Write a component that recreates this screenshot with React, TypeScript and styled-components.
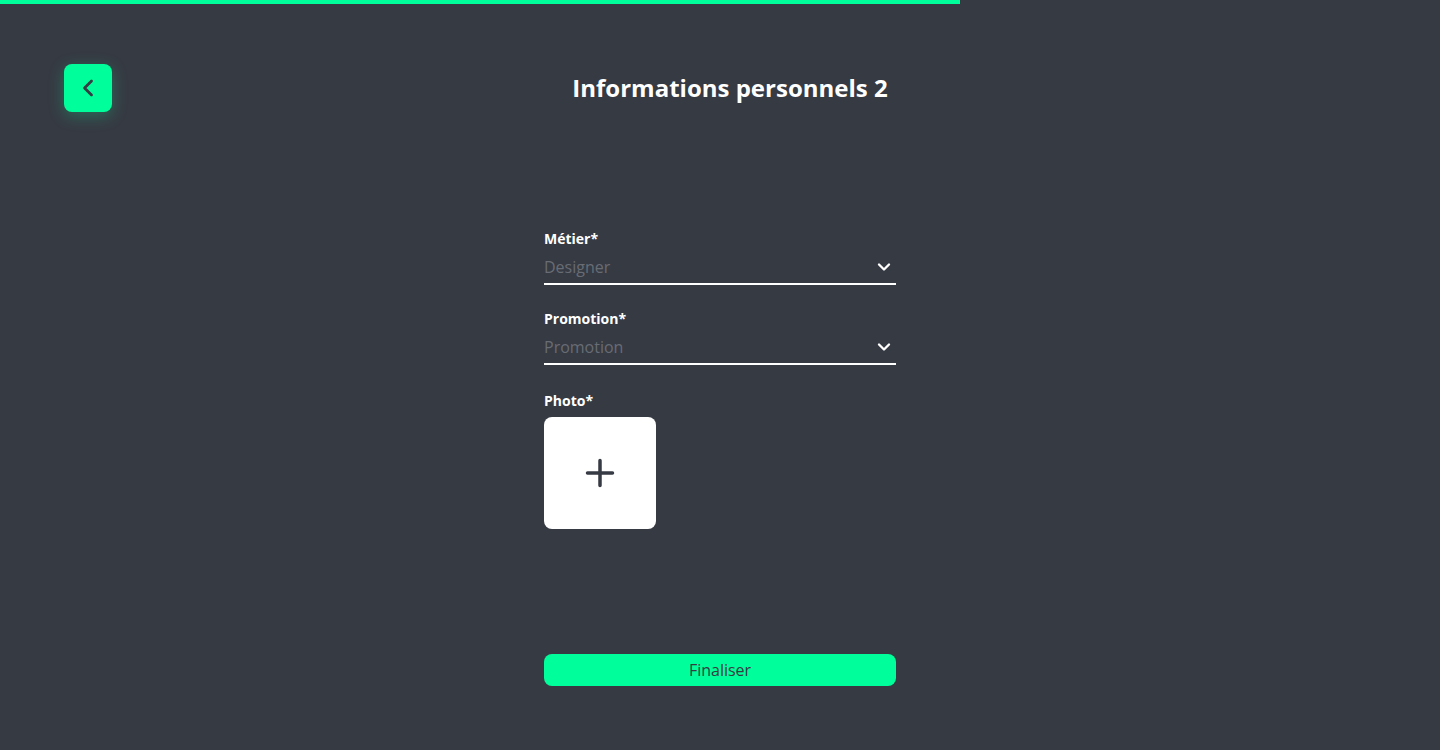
import React from "react";
import styled, { createGlobalStyle } from "styled-components";

const Global = createGlobalStyle`
  html, body { margin: 0; padding: 0; background: #363a43; }
  body { font-family: "Open Sans", "Noto Sans", sans-serif; color: #ffffff; }
  * { box-sizing: border-box; }
`;

const Page = styled.div`
  width: 1440px;
  min-height: 750px;
  background: #363a43;
  display: flex;
  flex-direction: column;
`;

const Progress = styled.div`
  height: 4px;
  width: 100%;
  background: transparent;
`;

const ProgressFill = styled.div`
  height: 100%;
  background: #00ff9a;
`;

const Header = styled.header`
  display: flex;
  align-items: center;
  padding: 60px 92px 0 64px;
`;

const BackButton = styled.button`
  width: 48px;
  height: 48px;
  border: none;
  border-radius: 8px;
  background: #00ff9a;
  box-shadow: 0 4px 16px rgba(0, 255, 154, 0.25);
  display: flex;
  align-items: center;
  justify-content: center;
  padding: 0;
  cursor: pointer;
  flex-shrink: 0;
`;

const Title = styled.h1`
  flex: 1;
  margin: 0;
  text-align: center;
  font-size: 24px;
  font-weight: 700;
  line-height: 32px;
  color: #ffffff;
`;

const Form = styled.form`
  width: 352px;
  margin: 117px auto 0;
  display: flex;
  flex-direction: column;
`;

const Field = styled.div<{ $gap?: number }>`
  display: flex;
  flex-direction: column;
  margin-top: ${(p) => p.$gap ?? 0}px;
`;

const Label = styled.label`
  font-size: 14px;
  font-weight: 700;
  line-height: 20px;
  color: #ffffff;
`;

const SelectRow = styled.div`
  display: flex;
  align-items: center;
  justify-content: space-between;
  padding: 7px 0 5px;
  border-bottom: 2px solid #ffffff;
`;

const Placeholder = styled.span`
  font-size: 16px;
  line-height: 22px;
  color: #686c74;
`;

const ChevronWrap = styled.span`
  display: flex;
  margin-right: 2px;
`;

const PhotoBox = styled.div`
  margin-top: 6px;
  width: 112px;
  height: 112px;
  border-radius: 8px;
  background: #ffffff;
  display: flex;
  align-items: center;
  justify-content: center;
`;

const SubmitButton = styled.button`
  margin-top: 125px;
  height: 32px;
  width: 100%;
  border: none;
  border-radius: 8px;
  background: #00ff9a;
  color: #363a43;
  font-family: "Open Sans", "Noto Sans", sans-serif;
  font-size: 16px;
  line-height: 22px;
  cursor: pointer;
`;

const Chevron = () => (
  <ChevronWrap>
    <svg width="20" height="20" viewBox="0 0 24 24" fill="none" stroke="#ffffff" strokeWidth="2.8" strokeLinecap="round" strokeLinejoin="round">
      <path d="m6 9 6 6 6-6" />
    </svg>
  </ChevronWrap>
);

const BackIcon = () => (
  <svg width="28" height="28" viewBox="0 0 24 24" fill="none" stroke="#363a43" strokeWidth="2.4" strokeLinecap="round" strokeLinejoin="round">
    <path d="m15 18-6-6 6-6" />
  </svg>
);

const PlusIcon = () => (
  <svg width="30" height="30" viewBox="0 0 30 30" fill="none" stroke="#363a43" strokeWidth="3.5" strokeLinecap="round">
    <path d="M2.5 15h25M15 2.5v25" />
  </svg>
);

export default function App() {
  return (
    <Page>
      <Global />
      <Progress>
        <ProgressFill style={{ width: `${(2 / 3) * 100}%` }} />
      </Progress>
      <Header>
        <BackButton type="button" aria-label="Retour">
          <BackIcon />
        </BackButton>
        <Title>Informations personnels 2</Title>
      </Header>
      <Form onSubmit={(e) => e.preventDefault()}>
        <Field>
          <Label>Métier*</Label>
          <SelectRow>
            <Placeholder>Designer</Placeholder>
            <Chevron />
          </SelectRow>
        </Field>
        <Field $gap={24}>
          <Label>Promotion*</Label>
          <SelectRow>
            <Placeholder>Promotion</Placeholder>
            <Chevron />
          </SelectRow>
        </Field>
        <Field $gap={26}>
          <Label>Photo*</Label>
          <PhotoBox>
            <PlusIcon />
          </PhotoBox>
        </Field>
        <SubmitButton type="submit">Finaliser</SubmitButton>
      </Form>
    </Page>
  );
}
